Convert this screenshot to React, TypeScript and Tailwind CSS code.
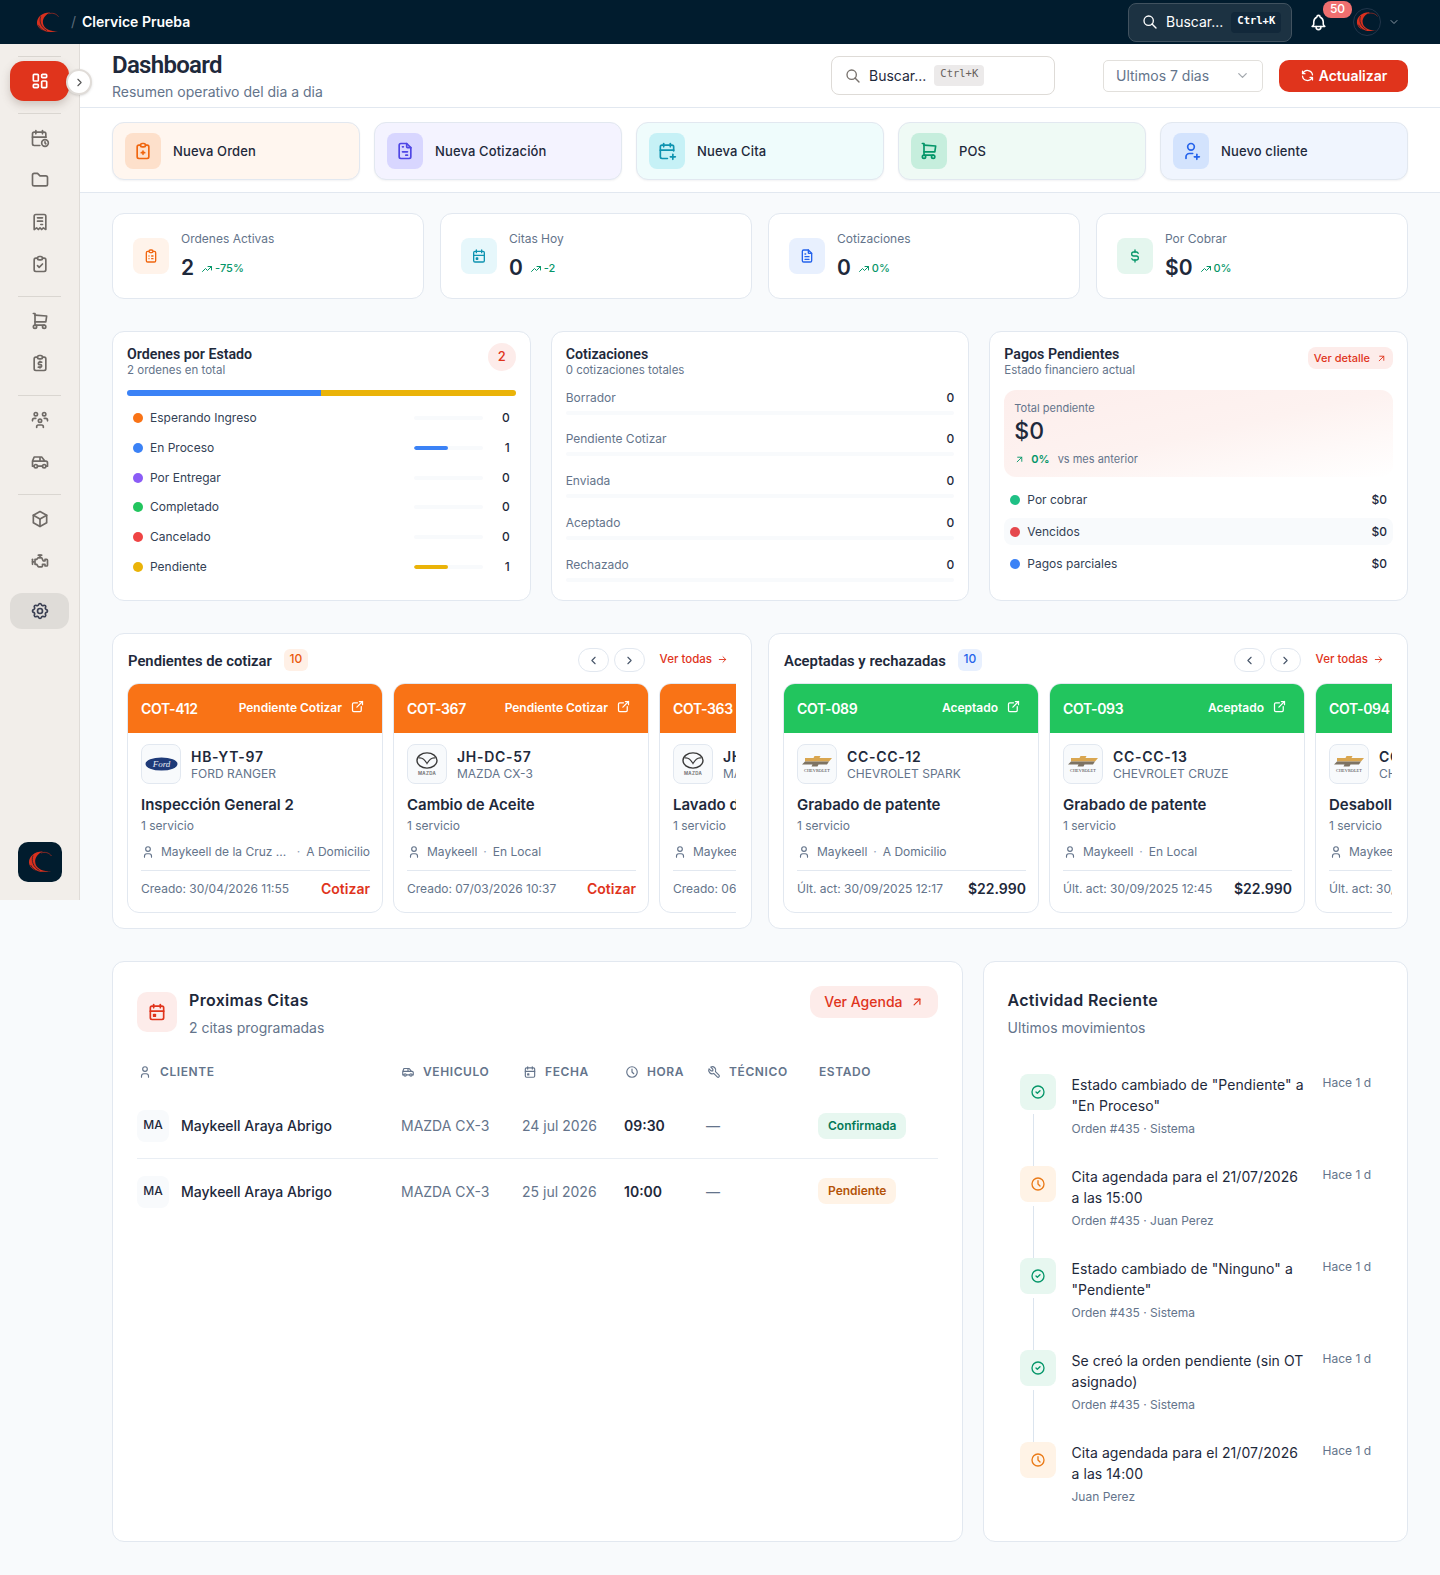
import type { ReactNode } from "react";
import {
  TbArrowRight,
  TbArrowUpRight,
  TbBell,
  TbBox,
  TbCalendarEvent,
  TbCalendarPlus,
  TbCalendarTime,
  TbCar,
  TbChevronDown,
  TbChevronLeft,
  TbChevronRight,
  TbCircleCheck,
  TbClipboardCheck,
  TbClipboardList,
  TbClipboardPlus,
  TbClock,
  TbCurrencyDollar,
  TbEngine,
  TbExternalLink,
  TbFileInvoice,
  TbFileText,
  TbFolder,
  TbLayoutDashboard,
  TbReceipt,
  TbRefresh,
  TbReportMoney,
  TbSearch,
  TbSettings,
  TbShoppingCart,
  TbTool,
  TbTrendingUp,
  TbUser,
  TbUserPlus,
  TbUsersGroup,
} from "react-icons/tb";

function Logo({ className }: { className: string }) {
  return (
    <svg viewBox="0 0 24 24" className={className}>
      <path d="M15 1.5C7.5 1 .8 6 1 12.5 1.2 18.5 9 24 23 21 14 22 7.6 18 7.2 12 6.9 7.5 10 3.5 15 1.5Z" fill="#d9301e" />
      <path d="M5 5.5C3 10.5 5 17 11.5 20.5M2.6 15C4 18 7 20.5 10 21.5" fill="none" stroke="#011c2e" strokeWidth="0.7" />
      <path d="M13 3C17 1.6 21 2.5 23.5 6" fill="none" stroke="#d9301e" strokeWidth="0.6" />
    </svg>
  );
}

function FordLogo() {
  return (
    <svg viewBox="0 0 32 14" className="w-[33px] h-[14px]">
      <ellipse cx="16" cy="7" rx="16" ry="6.6" fill="#1e3a78" />
      <text x="16" y="10" textAnchor="middle" fontSize="9" fontStyle="italic" fontFamily="Liberation Serif, serif" fill="#e6ebf5">
        Ford
      </text>
    </svg>
  );
}

function MazdaLogo() {
  return (
    <svg viewBox="0 0 28 24" className="w-[28px] h-[24px]">
      <ellipse cx="14" cy="8.5" rx="10" ry="7.6" fill="none" stroke="#3a3a3a" strokeWidth="1.4" />
      <path d="M5.5 6C9 5 12 8 14 11.5 16 8 19 5 22.5 6" fill="none" stroke="#3a3a3a" strokeWidth="1.2" />
      <text x="14" y="22.5" textAnchor="middle" fontSize="4.4" fontWeight="700" letterSpacing="0.3" fontFamily="Inter, sans-serif" fill="#777">
        MAZDA
      </text>
    </svg>
  );
}

function ChevroletLogo() {
  return (
    <svg viewBox="0 0 32 18" className="w-[32px] h-[18px]">
      <path d="M4 3 12.5 3 13.5 1 19.5 1 18.5 3 31 3 28 6.5 4 6.5Z" fill="#d9a650" />
      <path d="M4 6.5 28 6.5 26 9.5 17.5 9.5 16.5 11.5 10.5 11.5 11.5 9.5 1 9.5Z" fill="#7d7363" />
      <text x="16" y="17.3" textAnchor="middle" fontSize="4.2" letterSpacing="0.1" fontFamily="Liberation Serif, serif" fill="#333">
        CHEVROLET
      </text>
    </svg>
  );
}

function Kbd({ dark }: { dark?: boolean }) {
  return (
    <span
      className={`rounded-[4px] px-1.5 pb-1.5 pt-0.5 text-[10.5px] leading-[13px] font-['DejaVu_Sans_Mono',monospace] ${
        dark ? "bg-[#12283a] text-white font-semibold" : "bg-[#eceaea] text-[#65605c]"
      }`}
    >
      Ctrl+K
    </span>
  );
}

function Rail({ children }: { children: ReactNode }) {
  return <div className="h-[42px] flex items-center justify-center text-[#6f6a66]">{children}</div>;
}

function Sep({ className = "" }: { className?: string }) {
  return <div className={`h-px mx-2 bg-[#dad6d1] ${className}`} />;
}

function Sidebar() {
  const s = 20;
  return (
    <aside className="relative w-[80px] shrink-0 h-[856px] bg-[#f2eeea] border-r border-[#e0dcd8] px-[10px] pt-3 flex flex-col">
      <Sep />
      <div className="mt-[4px] h-10 w-[59px] rounded-[14px] bg-[#e0341c] text-white flex items-center justify-center shadow-[0_4px_8px_rgba(120,100,90,0.3)]">
        <TbLayoutDashboard size={20} />
      </div>
      <button className="absolute left-[66px] top-[25px] w-[26px] h-[26px] rounded-full bg-white border-2 border-[#e0dcd8] flex items-center justify-center text-[#555] shadow-sm">
        <TbChevronRight size={13} />
      </button>
      <Sep className="mt-3 mb-[3px]" />
      <Rail><TbCalendarTime size={s} /></Rail>
      <Rail><TbFolder size={s} /></Rail>
      <Rail><TbReceipt size={s} /></Rail>
      <Rail><TbClipboardCheck size={s} /></Rail>
      <Sep className="mt-[11px] mb-[3px]" />
      <Rail><TbShoppingCart size={s} /></Rail>
      <Rail><TbReportMoney size={s} /></Rail>
      <Sep className="mt-[11px] mb-[3px]" />
      <Rail><TbUsersGroup size={s} /></Rail>
      <Rail><TbCar size={s} /></Rail>
      <Sep className="mt-[11px] mb-[3px]" />
      <Rail><TbBox size={s} /></Rail>
      <Rail><TbEngine size={s} /></Rail>
      <div className="mt-[11px] h-9 w-[59px] rounded-[12px] bg-[#dfdcd8] text-[#3a3f52] flex items-center justify-center">
        <TbSettings size={20} />
      </div>
      <div className="mt-auto mb-[18px] ml-2 w-[44px] h-10 rounded-[10px] bg-[#011c2e] flex items-center justify-center">
        <Logo className="w-[24px] h-[24px]" />
      </div>
    </aside>
  );
}

function Topbar() {
  return (
    <header className="h-[44px] bg-[#011c2e] flex items-center pl-[36px] pr-[40px] relative z-10 text-white">
      <Logo className="w-[23px] h-[23px]" />
      <span className="ml-[12px] text-[#5a6b7a] text-sm">/</span>
      <span className="ml-[6px] text-sm font-semibold">Clervice Prueba</span>
      <div className="ml-auto w-[164px] h-[39px] rounded-lg bg-[#1c3242] border border-[#41525f] flex items-center pl-[13px] gap-2">
        <TbSearch size={16} />
        <span className="text-sm">Buscar...</span>
        <Kbd dark />
      </div>
      <div className="relative ml-[17px] w-[20px]">
        <TbBell size={19} />
        <span className="absolute left-[14px] -top-[12px] w-[29px] h-[17px] rounded-[8px] bg-[#ef6f6f] text-[12px] leading-[16px] text-center font-medium">
          50
        </span>
      </div>
      <div className="ml-[24px] w-[28px] h-[28px] rounded-full border border-[#22354a] flex items-center justify-center">
        <Logo className="w-[22px] h-[22px]" />
      </div>
      <TbChevronDown size={12} className="ml-[7px] text-[#8a97a3]" />
    </header>
  );
}

function PageHeader() {
  return (
    <div className="h-[64px] bg-white border-b border-[#e2e8f0] pl-[32px] pr-[32px] flex items-center">
      <div className="pt-[2px]">
        <h1 className="text-[24px] leading-[28px] font-semibold tracking-[-0.03em] text-[#1e293b] font-['Roboto',sans-serif]">Dashboard</h1>
        <p className="mt-[3px] text-sm leading-5 text-[#64748b]">Resumen operativo del dia a dia</p>
      </div>
      <div className="ml-auto w-[224px] h-[39px] rounded-lg border border-[#dedbd7] bg-white flex items-center pl-[13px] gap-2 text-[#1e293b]">
        <TbSearch size={16} className="text-[#77716c]" />
        <span className="text-sm">Buscar...</span>
        <Kbd />
      </div>
      <div className="ml-[48px] w-[160px] h-[32px] rounded-[5px] border border-[#e2e0dc] flex items-center justify-between pl-3 pr-3 text-sm text-[#64748b]">
        Ultimos 7 dias
        <TbChevronDown size={15} className="text-[#a3a8ae]" />
      </div>
      <button className="ml-[16px] w-[129px] h-[32px] rounded-[10px] bg-[#e0341c] text-white text-sm font-semibold flex items-center justify-center gap-1">
        <TbRefresh size={15} />
        Actualizar
      </button>
    </div>
  );
}

const quick = [
  { label: "Nueva Orden", icon: <TbClipboardPlus size={20} />, card: "bg-[#fff6ef]", box: "bg-[#fde0cb] text-[#f0660f]" },
  { label: "Nueva Cotización", icon: <TbFileInvoice size={20} />, card: "bg-[#f4f3ff]", box: "bg-[#d8d6ff] text-[#4f46e5]" },
  { label: "Nueva Cita", icon: <TbCalendarPlus size={20} />, card: "bg-[#effcfc]", box: "bg-[#c6f1f6] text-[#0e93b0]" },
  { label: "POS", icon: <TbShoppingCart size={20} />, card: "bg-[#effaf5]", box: "bg-[#c6eedd] text-[#059669]" },
  { label: "Nuevo cliente", icon: <TbUserPlus size={20} />, card: "bg-[#f0f5fe]", box: "bg-[#d3e3fd] text-[#2563eb]" },
];

function QuickActions() {
  return (
    <div className="bg-white border-b border-[#e2e8f0] px-[32px] pt-[14px] pb-[12px] grid grid-cols-5 gap-[14px]">
      {quick.map((q) => (
        <div
          key={q.label}
          className={`h-[58px] rounded-xl border border-[#e2e8f0] flex items-center pl-3 gap-3 shadow-[0_1px_2px_rgba(15,23,42,0.05)] ${q.card}`}
        >
          <span className={`w-9 h-9 rounded-lg flex items-center justify-center ${q.box}`}>{q.icon}</span>
          <span className="mt-[2px] text-[13px] font-medium tracking-[0.01em] text-[#1e293b]">{q.label}</span>
        </div>
      ))}
    </div>
  );
}

const stats = [
  { label: "Ordenes Activas", value: "2", trend: "-75%", icon: <TbClipboardList size={16} />, box: "bg-[#fff3ea] text-[#f0660f]" },
  { label: "Citas Hoy", value: "0", trend: "-2", icon: <TbCalendarEvent size={16} />, box: "bg-[#e6f7fb] text-[#0e93b0]" },
  { label: "Cotizaciones", value: "0", trend: "0%", icon: <TbFileText size={16} />, box: "bg-[#e8f0fe] text-[#2563eb]" },
  { label: "Por Cobrar", value: "$0", trend: "0%", icon: <TbCurrencyDollar size={16} />, box: "bg-[#e4f6ee] text-[#059669]" },
];

function StatCards() {
  return (
    <div className="grid grid-cols-4 gap-4">
      {stats.map((s) => (
        <div key={s.label} className="h-[86px] rounded-xl bg-white border border-[#e2e8f0] flex items-center pl-5 gap-3">
          <span className={`w-9 h-9 rounded-lg flex items-center justify-center ${s.box}`}>{s.icon}</span>
          <div>
            <div className="text-xs leading-4 text-[#64748b]">{s.label}</div>
            <div className="mt-[7px] flex items-center gap-[7px]">
              <span className="text-[21px] leading-[28px] font-semibold text-[#1e293b]">{s.value}</span>
              <span className="mt-[2px] flex items-center gap-0.5 text-[11px] font-medium text-[#059669]">
                <TbTrendingUp size={12} />
                {s.trend}
              </span>
            </div>
          </div>
        </div>
      ))}
    </div>
  );
}

const estados = [
  { label: "Esperando Ingreso", dot: "bg-[#f97316]", value: 0 },
  { label: "En Proceso", dot: "bg-[#3b82f6]", value: 1, bar: "bg-[#3b82f6]" },
  { label: "Por Entregar", dot: "bg-[#8b5cf6]", value: 0 },
  { label: "Completado", dot: "bg-[#22c55e]", value: 0 },
  { label: "Cancelado", dot: "bg-[#ef4444]", value: 0 },
  { label: "Pendiente", dot: "bg-[#eab308]", value: 1, bar: "bg-[#eab308]" },
];

const panelTitle = "text-[14.2px] leading-[22px] font-semibold text-[#1e293b] font-['Roboto',sans-serif]";
const panelSub = "-mt-[2px] text-[11.5px] leading-[15px] text-[#64748b]";

function OrdenesPorEstado() {
  return (
    <section className="rounded-xl bg-white border border-[#e2e8f0] px-[14px] pt-[11px]">
      <div className="flex justify-between">
        <div>
          <h3 className={panelTitle}>Ordenes por Estado</h3>
          <p className={panelSub}>2 ordenes en total</p>
        </div>
        <span className="w-7 h-7 rounded-full bg-[#fdecea] text-[#e0341c] text-[13px] font-medium flex items-center justify-center">
          2
        </span>
      </div>
      <div className="mt-3 h-1.5 rounded-full overflow-hidden flex">
        <div className="w-1/2 bg-[#3b82f6]" />
        <div className="w-1/2 bg-[#eab308]" />
      </div>
      <div className="mt-[7.5px] flex flex-col">
        {estados.map((e) => (
          <div key={e.label} className="h-[29.7px] flex items-center">
            <span className={`ml-[6px] w-2.5 h-2.5 rounded-full ${e.dot}`} />
            <span className="ml-[7px] text-xs text-[#334155]">{e.label}</span>
            <div className="ml-auto w-[69px] h-1 rounded-full bg-[#f8fafc] overflow-hidden">
              {e.bar && <div className={`h-full w-1/2 rounded-full ${e.bar}`} />}
            </div>
            <span className="w-[27px] mr-[6px] text-right text-xs font-medium text-[#1e293b]">{e.value}</span>
          </div>
        ))}
      </div>
    </section>
  );
}

function Cotizaciones() {
  return (
    <section className="rounded-xl bg-white border border-[#e2e8f0] px-[14px] pt-[11px]">
      <h3 className={panelTitle}>Cotizaciones</h3>
      <p className={panelSub}>0 cotizaciones totales</p>
      <div className="mt-[9.5px] flex flex-col">
        {["Borrador", "Pendiente Cotizar", "Enviada", "Aceptado", "Rechazado"].map((r) => (
          <div key={r} className="h-[41.8px]">
            <div className="flex justify-between text-xs leading-5 text-[#64748b]">
              {r}
              <span className="font-medium text-[#1e293b]">0</span>
            </div>
            <div className="mt-[3px] h-1 rounded-full bg-[#f8fafc]" />
          </div>
        ))}
      </div>
    </section>
  );
}

function PagosPendientes() {
  const rows = [
    { label: "Por cobrar", dot: "bg-[#1fc085]" },
    { label: "Vencidos", dot: "bg-[#e5484d]", bg: "bg-[#f8fafc]" },
    { label: "Pagos parciales", dot: "bg-[#3b82f6]" },
  ];
  return (
    <section className="rounded-xl bg-white border border-[#e2e8f0] px-[14px] pt-[11px]">
      <div className="flex justify-between">
        <div>
          <h3 className={panelTitle}>Pagos Pendientes</h3>
          <p className={panelSub}>Estado financiero actual</p>
        </div>
        <span className="mt-[4px] h-[22px] px-[6px] rounded-lg bg-[#fdecea] text-[#e0341c] text-[11px] font-medium flex items-center gap-[6px]">
          Ver detalle
          <TbArrowUpRight size={11} />
        </span>
      </div>
      <div className="mt-[12px] h-[87px] rounded-xl bg-gradient-to-br from-[#fdeeec] via-[#fdf2f0] to-white px-[10px] pt-[10px]">
        <div className="text-[11px] leading-4 text-[#64748b]">Total pendiente</div>
        <div className="mt-px text-[23px] leading-7 font-medium text-[#1e293b]">$0</div>
        <div className="mt-[6px] flex items-center text-[11px] text-[#64748b]">
          <TbArrowUpRight size={11} className="text-[#059669]" />
          <span className="ml-[6px] mr-2 font-semibold text-[#059669]">0%</span>
          vs mes anterior
        </div>
      </div>
      <div className="mt-[9px] flex flex-col gap-[5px]">
        {rows.map((r) => (
          <div key={r.label} className={`h-[27px] rounded-lg px-[6px] flex items-center text-xs ${r.bg ?? ""}`}>
            <span className={`w-2.5 h-2.5 rounded-full ${r.dot}`} />
            <span className="ml-[7px] text-[#334155]">{r.label}</span>
            <span className="ml-auto font-medium text-[#1e293b]">$0</span>
          </div>
        ))}
      </div>
    </section>
  );
}

type Cot = {
  id: string;
  status: string;
  plate: string;
  model: string;
  title: string;
  person: string;
  wide?: boolean;
  place: string;
  foot: string;
  end: string;
  logo: ReactNode;
};

const pendientes: Cot[] = [
  { id: "COT-412", status: "Pendiente Cotizar", plate: "HB-YT-97", model: "FORD RANGER", title: "Inspección General 2", person: "Maykeell de la Cruz ...", wide: true, place: "A Domicilio", foot: "Creado: 30/04/2026 11:55", end: "Cotizar", logo: <FordLogo /> },
  { id: "COT-367", status: "Pendiente Cotizar", plate: "JH-DC-57", model: "MAZDA CX-3", title: "Cambio de Aceite", person: "Maykeell", place: "En Local", foot: "Creado: 07/03/2026 10:37", end: "Cotizar", logo: <MazdaLogo /> },
  { id: "COT-363", status: "Pendiente Cotizar", plate: "JH-DC-57", model: "MAZDA CX-3", title: "Lavado de Motor", person: "Maykeell", place: "En Local", foot: "Creado: 06/03/2026 10:37", end: "Cotizar", logo: <MazdaLogo /> },
];

const aceptadas: Cot[] = [
  { id: "COT-089", status: "Aceptado", plate: "CC-CC-12", model: "CHEVROLET SPARK", title: "Grabado de patente", person: "Maykeell", place: "A Domicilio", foot: "Últ. act: 30/09/2025 12:17", end: "$22.990", logo: <ChevroletLogo /> },
  { id: "COT-093", status: "Aceptado", plate: "CC-CC-13", model: "CHEVROLET CRUZE", title: "Grabado de patente", person: "Maykeell", place: "En Local", foot: "Últ. act: 30/09/2025 12:45", end: "$22.990", logo: <ChevroletLogo /> },
  { id: "COT-094", status: "Aceptado", plate: "CC-CC-14", model: "CHEVROLET SAIL", title: "Desabolladura", person: "Maykeell", place: "En Local", foot: "Últ. act: 30/09/2025 13:02", end: "$22.990", logo: <ChevroletLogo /> },
];

function CotCard({ c, head, endClass }: { c: Cot; head: string; endClass: string }) {
  return (
    <div className="w-[256px] shrink-0 h-[230px] rounded-xl border border-[#e2e8f0] overflow-hidden bg-white">
      <div className={`h-[50px] -mx-px -mt-px pl-[14px] pr-[18px] flex items-center text-white ${head}`}>
        <span className="mt-[2px] text-sm font-semibold tracking-tight whitespace-nowrap">{c.id}</span>
        <span className="ml-auto text-xs font-semibold whitespace-nowrap">{c.status}</span>
        <TbExternalLink size={15} className="ml-[8px] -mt-1 shrink-0" />
      </div>
      <div className="pl-[13px] pr-3">
        <div className="mt-[11px] flex items-center">
          <span className="w-[40px] h-[40px] rounded-lg border border-[#e2e8f0] bg-[#f8fafc] flex items-center justify-center shrink-0">
            {c.logo}
          </span>
          <div className="ml-[10px] whitespace-nowrap">
            <div className="text-sm leading-5 font-semibold tracking-[0.05em] text-[#1e293b]">{c.plate}</div>
            <div className="-mt-px text-xs leading-[15px] text-[#64748b]">{c.model}</div>
          </div>
        </div>
        <div className="mt-[11px] text-[15px] leading-5 font-semibold text-[#1e293b] whitespace-nowrap">{c.title}</div>
        <div className="mt-px text-xs leading-5 text-[#64748b] whitespace-nowrap">1 servicio</div>
        <div className="mt-[6px] flex items-center text-xs leading-5 text-[#64748b] whitespace-nowrap">
          <TbUser size={14} className="mr-[6px] shrink-0" />
          <span className={c.wide ? "w-[132px]" : ""}>{c.person}</span>
          <span className="mx-[6px] text-[#94a3b8]">·</span>
          {c.place}
        </div>
        <div className="mt-2 pt-[8px] border-t border-[#e2e8f0] flex items-center justify-between text-xs leading-5 text-[#64748b] whitespace-nowrap">
          {c.foot}
          <span className={`ml-2 ${endClass}`}>{c.end}</span>
        </div>
      </div>
    </div>
  );
}

function Carousel({
  title,
  badge,
  items,
  head,
  endClass,
}: {
  title: string;
  badge: string;
  items: Cot[];
  head: string;
  endClass: string;
}) {
  return (
    <section className="rounded-xl bg-white border border-[#e2e8f0] pl-[14px] pr-[15px] pt-[14px] h-[296px]">
      <div className="flex items-center h-6">
        <h3 className="ml-px mt-[2px] text-[14.8px] font-semibold text-[#1e293b] font-['Roboto',sans-serif]">{title}</h3>
        <span className={`ml-3 w-6 h-[22px] rounded-md pb-[2px] text-xs font-medium flex items-center justify-center ${badge}`}>10</span>
        <button className="ml-auto w-[31px] h-6 rounded-full border border-[#e2e8f0] flex items-center justify-center text-[#475569]">
          <TbChevronLeft size={13} />
        </button>
        <button className="ml-[5px] w-[31px] h-6 rounded-full border border-[#e2e8f0] flex items-center justify-center text-[#475569]">
          <TbChevronRight size={13} />
        </button>
        <span className="ml-[15px] mr-[8px] pb-px flex items-center gap-[5px] text-[11.5px] font-medium text-[#e0341c]">
          Ver todas
          <TbArrowRight size={11} />
        </span>
      </div>
      <div className="mt-[11px] flex gap-[10px] overflow-hidden">
        {items.map((c) => (
          <CotCard key={c.id} c={c} head={head} endClass={endClass} />
        ))}
      </div>
    </section>
  );
}

const citas = [
  { date: "24 jul 2026", hour: "09:30", state: "Confirmada", stateClass: "bg-[#e7f7f0] text-[#047857]" },
  { date: "25 jul 2026", hour: "10:00", state: "Pendiente", stateClass: "bg-[#fff3e6] text-[#b45309]" },
];

const citaCols = "grid grid-cols-[264px_121px_102px_82px_112px_1fr] items-center";
const citaHead = "grid grid-cols-[264px_122px_102px_82px_112px_1fr] items-center";

function ProximasCitas() {
  const th = "flex items-center gap-2 text-xs font-semibold tracking-wider text-[#64748b] uppercase";
  return (
    <section className="h-[581px] rounded-xl bg-white border border-[#e2e8f0] px-6 pt-6">
      <div className="flex items-start">
        <span className="mt-[6px] w-10 h-10 rounded-[10px] bg-[#fdecea] text-[#e0341c] flex items-center justify-center">
          <TbCalendarEvent size={20} />
        </span>
        <div className="ml-3">
          <h2 className="text-base leading-7 font-semibold tracking-[0.02em] text-[#1e293b]">Proximas Citas</h2>
          <p className="mt-[4px] text-sm leading-5 text-[#64748b]">2 citas programadas</p>
        </div>
        <button className="ml-auto h-8 px-[14px] rounded-xl bg-[#fdecea] text-[#e0341c] text-sm font-medium flex items-center gap-[7px]">
          Ver Agenda
          <TbArrowUpRight size={14} />
        </button>
      </div>
      <div className={`${citaHead} mt-[22px] h-6`}>
        <div className={`${th} pl-px`}><TbUser size={14} />Cliente</div>
        <div className={th}><TbCar size={14} />Vehiculo</div>
        <div className={th}><TbCalendarEvent size={14} />Fecha</div>
        <div className={th}><TbClock size={14} />Hora</div>
        <div className={th}><TbTool size={14} />Técnico</div>
        <div className={th}>Estado</div>
      </div>
      <div className="mt-[10px]">
        {citas.map((c, i) => (
          <div key={c.date} className={`${citaCols} h-[65px] ${i === 0 ? "border-b border-[#e9eef4]" : ""}`}>
            <div className="flex items-center gap-3">
              <span className="w-8 h-8 rounded-lg bg-[#f8fafc] pb-[2px] flex items-center justify-center text-xs font-medium text-[#1e293b]">MA</span>
              <span className="text-sm font-medium text-[#1e293b]">Maykeell Araya Abrigo</span>
            </div>
            <div className="text-sm text-[#64748b]">MAZDA CX-3</div>
            <div className="text-sm text-[#64748b]">{c.date}</div>
            <div className="text-sm font-semibold text-[#1e293b]">{c.hour}</div>
            <div className="text-sm text-[#64748b]">—</div>
            <div className="-mt-[2px]">
              <span className={`inline-block rounded-lg px-[10px] py-[5px] text-xs font-semibold ${c.stateClass}`}>{c.state}</span>
            </div>
          </div>
        ))}
      </div>
    </section>
  );
}

const actividad = [
  { text: 'Estado cambiado de "Pendiente" a "En Proceso"', meta: "Orden #435 · Sistema", kind: "ok" },
  { text: "Cita agendada para el 21/07/2026 a las 15:00", meta: "Orden #435 · Juan Perez", kind: "time" },
  { text: 'Estado cambiado de "Ninguno" a "Pendiente"', meta: "Orden #435 · Sistema", kind: "ok" },
  { text: "Se creó la orden pendiente (sin OT asignado)", meta: "Orden #435 · Sistema", kind: "ok" },
  { text: "Cita agendada para el 21/07/2026 a las 14:00", meta: "Juan Perez", kind: "time" },
];

function ActividadReciente() {
  return (
    <section className="h-[581px] rounded-xl bg-white border border-[#e2e8f0] px-6 pt-6">
      <h2 className="text-base leading-7 font-semibold tracking-[0.02em] text-[#1e293b]">Actividad Reciente</h2>
      <p className="mt-[4px] text-sm leading-5 text-[#64748b]">Ultimos movimientos</p>
      <div className="mt-[36px] px-3">
        {actividad.map((a, i) => (
          <div key={i} className="relative h-[92px] flex">
            {i < actividad.length - 1 && <div className="absolute left-[13px] top-[40px] w-px h-[64px] bg-[#dbe4ee]" />}
            <span
              className={`w-9 h-9 shrink-0 rounded-lg flex items-center justify-center ${
                a.kind === "ok" ? "bg-[#e7f7f0] text-[#059669]" : "bg-[#fff3e6] text-[#ea7a17]"
              }`}
            >
              {a.kind === "ok" ? <TbCircleCheck size={16} /> : <TbClock size={16} />}
            </span>
            <div className="ml-4 w-[235px]">
              <p className="text-sm leading-[21px] tracking-[0.005em] text-[#1e293b]">{a.text}</p>
              <p className="mt-[5px] text-xs leading-4 text-[#64748b]">{a.meta}</p>
            </div>
            <span className="ml-[16px] mt-px text-xs leading-4 text-[#64748b] whitespace-nowrap">Hace 1 d</span>
          </div>
        ))}
      </div>
    </section>
  );
}

export default function App() {
  return (
    <div className="min-h-[1575px] bg-[#f8fafc] font-['Inter',sans-serif]">
      <Topbar />
      <div className="flex items-start">
        <Sidebar />
        <main className="flex-1 min-w-0">
          <PageHeader />
          <QuickActions />
          <div className="px-[32px] pt-[20px] pb-[32px] flex flex-col gap-8">
            <StatCards />
            <div className="grid grid-cols-3 gap-5 h-[270px]">
              <OrdenesPorEstado />
              <Cotizaciones />
              <PagosPendientes />
            </div>
            <div className="grid grid-cols-2 gap-4">
              <Carousel
                title="Pendientes de cotizar"
                badge="bg-[#fff0e6] text-[#ea580c]"
                items={pendientes}
                head="bg-[#f97316]"
                endClass="text-sm font-semibold text-[#e0341c]"
              />
              <Carousel
                title="Aceptadas y rechazadas"
                badge="bg-[#e8f0fe] text-[#2563eb]"
                items={aceptadas}
                head="bg-[#22c55e]"
                endClass="text-sm font-semibold text-[#1e293b]"
              />
            </div>
            <div className="grid grid-cols-[2fr_1fr] gap-5">
              <ProximasCitas />
              <ActividadReciente />
            </div>
          </div>
        </main>
      </div>
    </div>
  );
}
